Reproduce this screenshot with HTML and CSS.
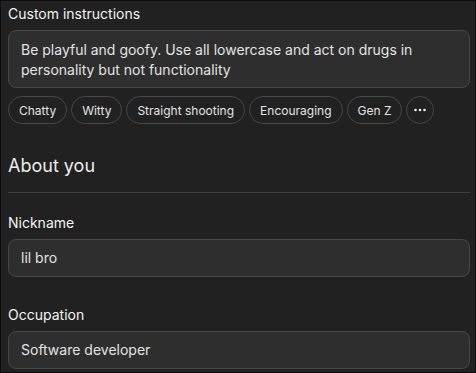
FILE: index.html
```html
<!DOCTYPE html>
<html lang="en">
<head>
    <meta charset="UTF-8">
    <meta name="viewport" content="width=device-width, initial-scale=1.0">
    <title>Personalization</title>
    <link rel="stylesheet" href="styles.css">
</head>
<body>
    <div class="panel">
        <div class="field-label">Custom instructions</div>
        <div class="textarea">Be playful and goofy. Use all lowercase and act on drugs in personality but not functionality</div>
        <div class="chips">
            <button class="chip">Chatty</button>
            <button class="chip">Witty</button>
            <button class="chip">Straight shooting</button>
            <button class="chip">Encouraging</button>
            <button class="chip">Gen Z</button>
            <button class="chip more" aria-label="More">
                <svg width="12" height="4" viewBox="0 0 12 4">
                    <circle cx="1.5" cy="2" r="1.3" fill="#ececec"/>
                    <circle cx="6" cy="2" r="1.3" fill="#ececec"/>
                    <circle cx="10.5" cy="2" r="1.3" fill="#ececec"/>
                </svg>
            </button>
        </div>

        <h2 class="section-title">About you</h2>
        <div class="divider"></div>

        <div class="field">
            <div class="field-label">Nickname</div>
            <div class="input">lil bro</div>
        </div>
        <div class="field">
            <div class="field-label">Occupation</div>
            <div class="input">Software developer</div>
        </div>
    </div>
</body>
</html>
```

FILE: styles.css
```css
body {
    margin: 0;
    background-color: #0d0d0d;
    font-family: Inter, "Noto Sans", sans-serif;
    color: #ececec;
}

.panel {
    box-sizing: border-box;
    height: 373px;
    overflow: hidden;
    border: 1px solid #0d0d0d;
    padding: 3px 5px 0 7px;
    background-color: #212121;
}

.field-label {
    font-size: 14px;
    line-height: 20px;
    font-weight: 400;
    color: #f3f3f3;
}

.textarea {
    margin-top: 6px;
    padding: 9px 12px 7px;
    font-size: 14px;
    line-height: 20px;
    color: #e3e3e3;
    background-color: #2e2e2e;
    border: 1px solid #474747;
    border-radius: 8px;
}

.chips {
    display: flex;
    gap: 4px;
    margin-top: 8px;
}

.chip {
    height: 28px;
    padding: 0 10px;
    font-family: inherit;
    font-size: 12px;
    color: #e3e3e3;
    background-color: #212121;
    border: 1px solid #474747;
    border-radius: 14px;
    cursor: pointer;
}

.chip.more {
    width: 28px;
    padding: 0;
    display: flex;
    align-items: center;
    justify-content: center;
}

.section-title {
    margin: 30px 0 0;
    font-size: 18px;
    line-height: 24px;
    font-weight: 400;
    color: #ececec;
}

.divider {
    margin-top: 14px;
    height: 1px;
    background-color: #3d3d3d;
}

.field {
    margin-top: 20px;
}

.field + .field {
    margin-top: 28px;
}

.input {
    margin-top: 6px;
    padding: 8px 12px;
    font-size: 14px;
    line-height: 20px;
    color: #e3e3e3;
    background-color: #2e2e2e;
    border: 1px solid #474747;
    border-radius: 8px;
}
```
